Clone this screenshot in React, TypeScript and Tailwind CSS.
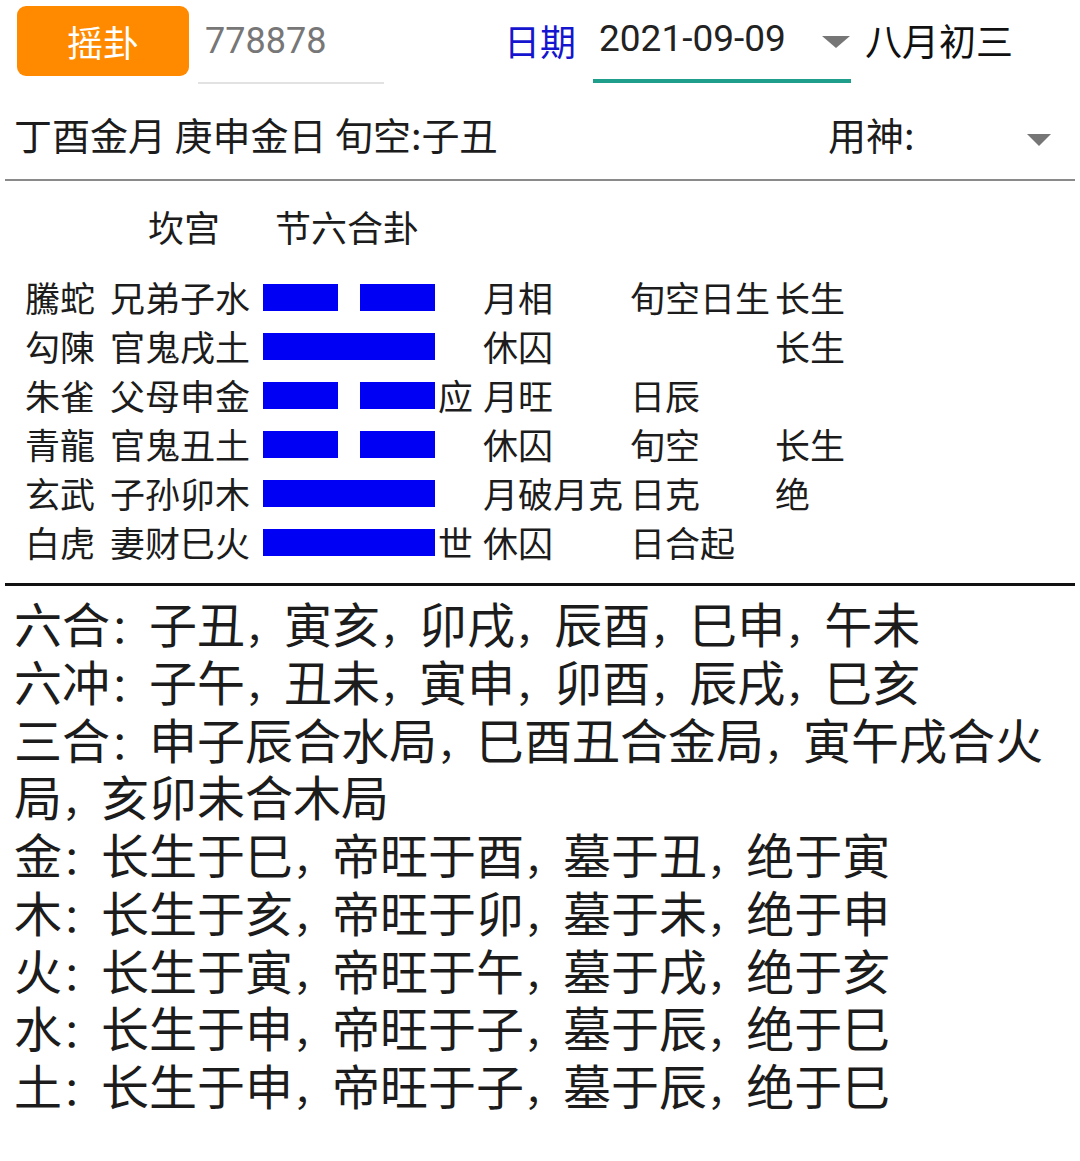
import React from "react";

const cjk = { fontFamily: '"Noto Sans CJK SC", "Noto Sans", sans-serif' };

type Yao = {
  shen: string;
  qin: string;
  yin: boolean;
  mark: string;
  a: string;
  b: string;
  c: string;
};

const yaos: Yao[] = [
  { shen: "騰蛇", qin: "兄弟子水", yin: true, mark: "", a: "月相", b: "旬空日生", c: "长生" },
  { shen: "勾陳", qin: "官鬼戌土", yin: false, mark: "", a: "休囚", b: "", c: "长生" },
  { shen: "朱雀", qin: "父母申金", yin: true, mark: "应", a: "月旺", b: "日辰", c: "" },
  { shen: "青龍", qin: "官鬼丑土", yin: true, mark: "", a: "休囚", b: "旬空", c: "长生" },
  { shen: "玄武", qin: "子孙卯木", yin: false, mark: "", a: "月破月克", b: "日克", c: "绝" },
  { shen: "白虎", qin: "妻财巳火", yin: false, mark: "世", a: "休囚", b: "日合起", c: "" },
];

const notes = [
  "六合：子丑，寅亥，卯戌，辰酉，巳申，午未",
  "六冲：子午，丑未，寅申，卯酉，辰戌，巳亥",
  "三合：申子辰合水局，巳酉丑合金局，寅午戌合火局，亥卯未合木局",
  "金：长生于巳，帝旺于酉，墓于丑，绝于寅",
  "木：长生于亥，帝旺于卯，墓于未，绝于申",
  "火：长生于寅，帝旺于午，墓于戌，绝于亥",
  "水：长生于申，帝旺于子，墓于辰，绝于巳",
  "土：长生于申，帝旺于子，墓于辰，绝于巳",
];

// punctuation in the reference is a bit narrower than a full em
function Note({ text }: { text: string }) {
  const parts = text.split(/([：，])/);
  return (
    <div>
      {parts.map((p, i) =>
        p === "：" || p === "，" ? (
          <span key={i} className="text-[39px] leading-[0px]">
            {p}
          </span>
        ) : (
          <React.Fragment key={i}>{p}</React.Fragment>
        )
      )}
    </div>
  );
}

function Caret({ w = 30 }: { w?: number }) {
  return (
    <svg width={w} height="14" viewBox={`0 0 ${w} 14`}>
      <path d={`M1 1 L${w - 1} 1 L${w / 2} 13 Z`} fill="#767676" />
    </svg>
  );
}

function Line({ yin }: { yin: boolean }) {
  if (!yin) return <div className="w-[172px] h-[27px] bg-[#0000f5]" />;
  return (
    <div className="w-[172px] h-[27px] flex justify-between">
      <div className="w-[75px] h-full bg-[#0000f5]" />
      <div className="w-[75px] h-full bg-[#0000f5]" />
    </div>
  );
}

export default function App() {
  return (
    <div className="w-[1080px] min-h-[1161px] bg-white text-[#1c1c1c]" style={cjk}>
      {/* top bar */}
      <div className="flex h-[88px]">
        <div className="pl-[17px] pt-[6px]">
          <button className="w-[172px] h-[70px] rounded-[9px] bg-[#ff8a00] text-white text-[36px] leading-none">
            摇卦
          </button>
        </div>
        <div className="ml-[9px] w-[186px] h-[84px] border-b-2 border-[#e2e2e2] flex items-center pl-[7px] text-[36px] text-[#777] font-['Roboto']">
          778878
        </div>
        <div className="ml-[120px] h-[80px] flex items-center text-[36px] text-[#1515d0]">日期</div>
        <div className="ml-[17px] w-[258px] h-[83px] border-b-4 border-[#1f9e8b] flex items-center pl-[6px] text-[37px] text-[#222] font-['Roboto']">
          <span className="pb-[2px]">2021-09-09</span>
          <span className="ml-auto mt-[4px]">
            <Caret />
          </span>
        </div>
        <div className="ml-[14px] h-[82px] flex items-center text-[37px] text-[#111]">八月初三</div>
      </div>

      {/* day info */}
      <div className="flex items-center h-[91px] pl-[14px] text-[38px]">
        <span>丁酉金月 庚申金日 旬空:子丑</span>
        <div className="ml-auto mr-[28px] w-[224px] flex items-center">
          <span>用神:</span>
          <span className="ml-auto mt-[12px]">
            <Caret w={26} />
          </span>
        </div>
      </div>
      <div className="mx-[5px] h-[2px] bg-[#8a8a8a]" />

      {/* gua */}
      <div className="h-[89px] flex items-center text-[36px]">
        <span className="pl-[148px]">坎宫</span>
        <span className="pl-[55px]">节六合卦</span>
      </div>
      <div className="mt-[3px] text-[35px]">
        {yaos.map((y) => (
          <div key={y.shen} className="flex items-center h-[49px]">
            <div className="pl-[25px] w-[110px]">{y.shen}</div>
            <div className="w-[153px]">{y.qin}</div>
            <Line yin={y.yin} />
            <div className="w-[48px] pl-[3px]">{y.mark}</div>
            <div className="w-[147px] whitespace-nowrap">{y.a}</div>
            <div className="w-[145px] whitespace-nowrap">{y.b}</div>
            <div>{y.c}</div>
          </div>
        ))}
      </div>
      <div className="mt-[16px] mx-[5px] h-[3px] bg-[#111]" />

      {/* notes */}
      <div className="pt-[8px] pl-[14px] pr-[4px] text-[48px] leading-[57.75px] text-[#1c1c1c]">
        {notes.map((n) => (
          <Note key={n} text={n} />
        ))}
      </div>
    </div>
  );
}
